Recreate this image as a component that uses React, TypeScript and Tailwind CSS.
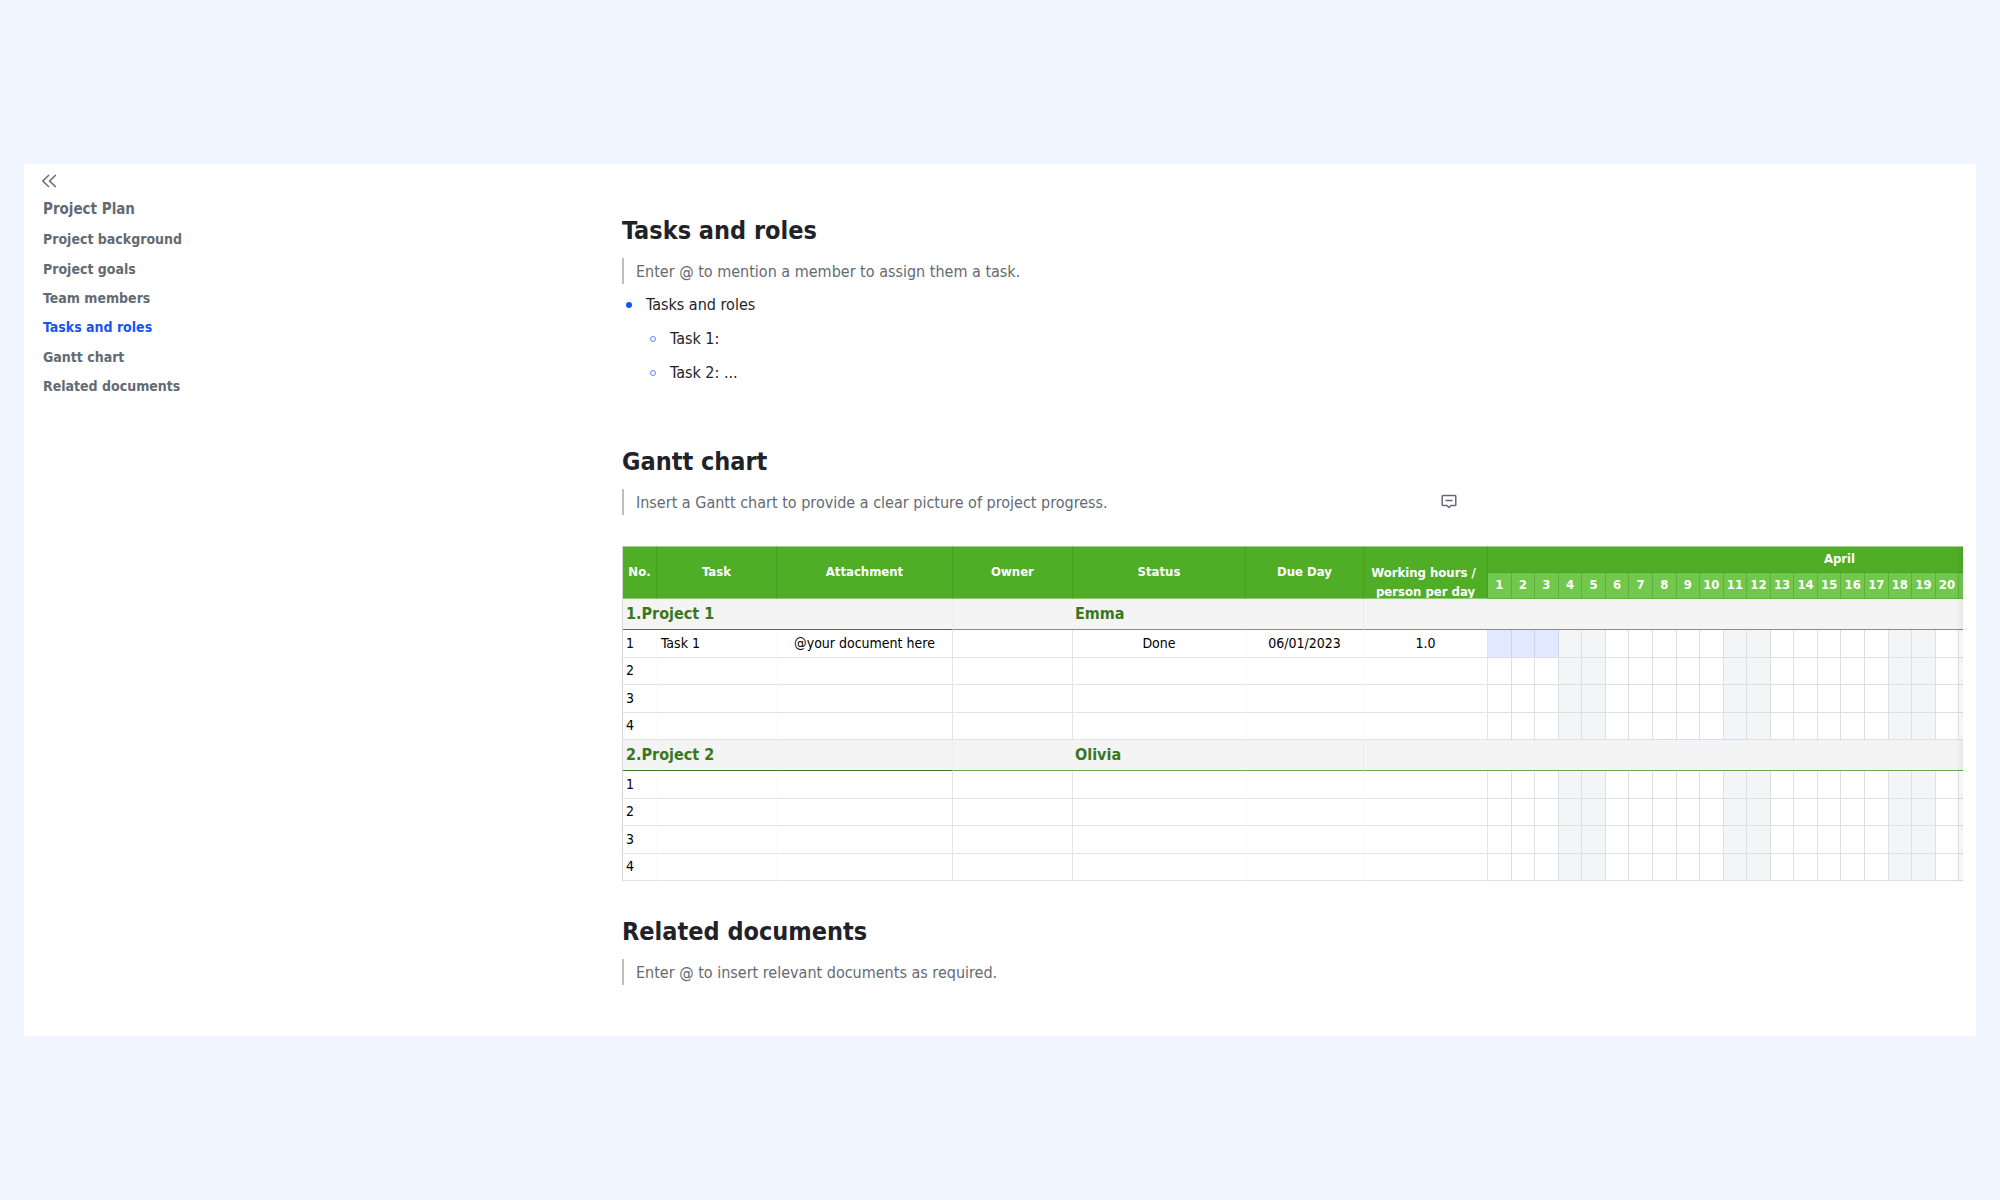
import { clsx } from 'clsx';

const navItems = [
    { id: 'project-plan', label: 'Project Plan' },
    { id: 'project-background', label: 'Project background' },
    { id: 'project-goals', label: 'Project goals' },
    { id: 'team-members', label: 'Team members' },
    { id: 'tasks-and-roles', label: 'Tasks and roles' },
    { id: 'gantt-chart', label: 'Gantt chart' },
    { id: 'related-documents', label: 'Related documents' },
];

const days = Array.from({ length: 30 }, (_, i) => i + 1);
const weekend = [4, 5, 11, 12, 18, 19, 25, 26];

type Task = { task?: string; attachment?: string; status?: string; due?: string; hours?: string; busy?: number[]; marked?: number[] };

const projects: { name: string; owner: string; tasks: Task[] }[] = [
    {
        name: '1.Project 1',
        owner: 'Emma',
        tasks: [
            { task: 'Task 1', attachment: '@your document here', status: 'Done', due: '06/01/2023', hours: '1.0', busy: [1, 2, 3] },
            {},
            {},
            { marked: [8, 9, 10, 11] },
        ],
    },
    { name: '2.Project 2', owner: 'Olivia', tasks: [{}, {}, {}, {}] },
];

function Heading({ children }: { children: string }) {
    return <h2 className="text-[25px] leading-9 font-bold text-[#1f2329]">{children}</h2>;
}

function Hint({ children }: { children: string }) {
    return (
        <blockquote className="mt-[9px] h-[26px] border-l-2 border-[#bbbfc4] pl-3 text-base leading-7 text-[#646a73]">
            {children}
        </blockquote>
    );
}

function GanttTable() {
    return (
        <div className="relative mt-[31px]">
            {/* days past the right edge are reached by scrolling */}
            <div className="overflow-x-auto [scrollbar-width:none]">
                <table className="w-[1573px] table-fixed border-separate border-spacing-0 border-l border-[#d6d8da] text-sm text-black">
                    <colgroup>
                        <col className="w-[34px]" />
                        <col className="w-[120px]" />
                        <col className="w-[176px]" />
                        <col className="w-[120px]" />
                        <col className="w-[173px]" />
                        <col className="w-[118px]" />
                        <col className="w-[124px]" />
                        {days.map((day) => (
                            <col key={day} />
                        ))}
                    </colgroup>
                    <thead className="text-[13px] text-white">
                        <tr className="h-[27px]">
                            {['No.', 'Task', 'Attachment', 'Owner', 'Status', 'Due Day'].map((name) => (
                                <th key={name} rowSpan={2} className="border-t border-r border-b border-t-[#a9cf98] border-r-[#46a023] border-b-[#8fc876] bg-[#50ad26] p-0">
                                    {name}
                                </th>
                            ))}
                            <th rowSpan={2} className="border-t border-r border-b border-t-[#a9cf98] border-r-[#46a023] border-b-[#8fc876] bg-[#50ad26] p-0 align-top">
                                <div className="h-[51px] overflow-hidden pt-4 pr-1 leading-[19px]">
                                    Working hours /<br />
                                    <span className="pl-1">person per day</span>
                                </div>
                            </th>
                            <th colSpan={30} className="border-t border-b border-t-[#a9cf98] border-b-[#49a324] bg-[#50ad26] p-0 pr-1">
                                April
                            </th>
                        </tr>
                        <tr className="h-[26px]">
                            {days.map((day) => (
                                <th key={day} className="border-r border-b border-r-[#5fae40] border-b-[#63b342] bg-[#71c84c] p-0">
                                    {day}
                                </th>
                            ))}
                        </tr>
                    </thead>
                    {projects.map((project) => (
                        <tbody key={project.name}>
                            <tr className="h-[31px] bg-[#f4f4f4] text-base text-[#39771f]">
                                <th colSpan={3} className="border-r border-b border-r-[#eeeeee] border-b-[#3a811d] p-0 pl-[3px] text-left">
                                    {project.name}
                                </th>
                                <td className="border-b border-[#66ad47] p-0" />
                                <th className="border-r border-b border-r-[#eeeeee] border-b-[#66ad47] p-0 pl-[2px] text-left">{project.owner}</th>
                                <td className="border-r border-b border-r-[#eeeeee] border-b-[#66ad47] p-0" />
                                <td colSpan={31} className="border-b border-[#66ad47] p-0" />
                            </tr>
                            {project.tasks.map((row, i) => (
                                <tr key={i} className="text-center odd:h-[27px] even:h-7">
                                    <td className="border-r border-b border-r-[#fafafa] border-b-[#e3e3e3] p-0 pb-[2px] pl-[3px] text-left">{i + 1}</td>
                                    <td className="border-r border-b border-r-[#fafafa] border-b-[#e3e3e3] p-0 pb-[2px] pl-1 text-left">{row.task}</td>
                                    <td className="border-r border-b border-[#e3e3e3] p-0 pb-[2px]">{row.attachment}</td>
                                    <td className="border-r border-b border-[#e3e3e3] p-0" />
                                    <td className="border-r border-b border-r-[#fafafa] border-b-[#e3e3e3] p-0 pb-[2px]">{row.status}</td>
                                    <td className="border-r border-b border-r-[#fafafa] border-b-[#e3e3e3] p-0 pb-[2px]">{row.due}</td>
                                    <td className="border-r border-b border-[#e3e3e3] p-0 pb-[2px]">{row.hours}</td>
                                    {days.map((day) => (
                                        <td
                                            key={day}
                                            className={clsx(
                                                'border-r border-b p-0',
                                                row.busy?.includes(day) ? 'border-[#ccd5eb] bg-[#e0e9ff]' : 'border-r-[#dedfe0]',
                                                row.marked?.includes(day) ? 'border-b-[#cfe5c4]' : 'border-b-[#dedfe0]',
                                                weekend.includes(day) && 'bg-[#f4f5f7]',
                                            )}
                                        />
                                    ))}
                                </tr>
                            ))}
                        </tbody>
                    ))}
                </table>
            </div>
            <div className="pointer-events-none absolute inset-y-0 right-0 w-2 bg-linear-to-r from-transparent to-black/5" />
        </div>
    );
}

export default function App() {
    return (
        <div className="flex min-h-screen items-center bg-[#f0f5ff] px-6 font-['DejaVu_Sans_Condensed','Noto_Sans',sans-serif]">
            <div className="grid w-full grid-cols-[598px_minmax(0,1fr)] bg-white pr-[13px]">
                <aside className="pt-[9px] pl-[18px]">
                    <button type="button" aria-label="Collapse outline" className="block text-[#646a73]">
                        <svg className="size-4" viewBox="0 0 16 16" fill="none" stroke="currentColor" strokeWidth="1.5">
                            <path d="M7 2 .8 8 7 14M13.800 2 7.600 8l6.200 6" />
                        </svg>
                    </button>
                    <nav className="mt-[6px] grid h-[206px] auto-rows-fr items-center pl-px text-sm font-bold text-[#646a73]">
                        {navItems.map((item, i) => (
                            <a key={item.id} href={`#${item.id}`} className={clsx(i === 0 && 'text-[15px]', item.id === 'tasks-and-roles' && 'text-[#1456f0]')}>
                                {item.label}
                            </a>
                        ))}
                    </nav>
                </aside>

                <main className="pt-[49px] pb-[51px]">
                    <section id="tasks-and-roles">
                        <Heading>Tasks and roles</Heading>
                        <Hint>Enter @ to mention a member to assign them a task.</Hint>
                        <ul className="mt-1 text-base leading-[34px] text-[#1f2329]">
                            <li>
                                <div className="flex items-center gap-[14px] pl-1">
                                    <span className="size-[6px] rounded-full bg-[#1456f0]" />
                                    Tasks and roles
                                </div>
                                <ul className="pl-7">
                                    {['Task 1:', 'Task 2: ...'].map((task) => (
                                        <li key={task} className="flex items-center gap-[14px]">
                                            <span className="size-[6px] rounded-full border border-[#5a87f5]" />
                                            {task}
                                        </li>
                                    ))}
                                </ul>
                            </li>
                        </ul>
                    </section>

                    <section id="gantt-chart" className="mt-[54px]">
                        <Heading>Gantt chart</Heading>
                        <div className="flex justify-between">
                            <Hint>Insert a Gantt chart to provide a clear picture of project progress.</Hint>
                            <button type="button" aria-label="Add comment" className="mt-2 mr-[506px] text-[#646a73]">
                                <svg className="size-4" viewBox="0 0 16 16" fill="none" stroke="currentColor" strokeWidth="1.5" strokeLinejoin="round">
                                    <path d="M2 1.500h12a.8.8 0 0 1 .8.8v8.400a.8.8 0 0 1-.8.8h-4l-2 2-2-2H2a.8.8 0 0 1-.8-.8V2.300A.8.8 0 0 1 2 1.500ZM4.500 6.500h7" />
                                </svg>
                            </button>
                        </div>
                        <GanttTable />
                    </section>

                    <section id="related-documents" className="mt-[33px]">
                        <Heading>Related documents</Heading>
                        <Hint>Enter @ to insert relevant documents as required.</Hint>
                    </section>
                </main>
            </div>
        </div>
    );
}
